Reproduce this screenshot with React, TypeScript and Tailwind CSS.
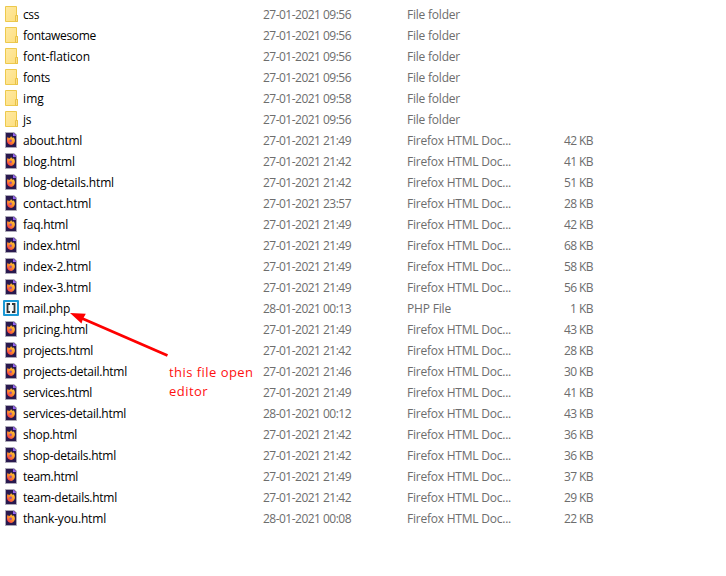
import { useLayoutEffect, useRef, useState } from 'react';

type Kind = 'folder' | 'html' | 'php';
type Entry = { name: string; width: number; date: string; kind: Kind; size?: string };

const entries: Entry[] = [
  { name: 'css', width: 16, date: '27-01-2021 09:56', kind: 'folder' },
  { name: 'fontawesome', width: 73, date: '27-01-2021 09:56', kind: 'folder' },
  { name: 'font-flaticon', width: 67, date: '27-01-2021 09:56', kind: 'folder' },
  { name: 'fonts', width: 27, date: '27-01-2021 09:56', kind: 'folder' },
  { name: 'img', width: 21, date: '27-01-2021 09:58', kind: 'folder' },
  { name: 'js', width: 8, date: '27-01-2021 09:56', kind: 'folder' },
  { name: 'about.html', width: 59, date: '27-01-2021 21:49', kind: 'html', size: '42 KB' },
  { name: 'blog.html', width: 52, date: '27-01-2021 21:42', kind: 'html', size: '41 KB' },
  { name: 'blog-details.html', width: 91, date: '27-01-2021 21:42', kind: 'html', size: '51 KB' },
  { name: 'contact.html', width: 68, date: '27-01-2021 23:57', kind: 'html', size: '28 KB' },
  { name: 'faq.html', width: 45, date: '27-01-2021 21:49', kind: 'html', size: '42 KB' },
  { name: 'index.html', width: 57, date: '27-01-2021 21:49', kind: 'html', size: '68 KB' },
  { name: 'index-2.html', width: 68, date: '27-01-2021 21:49', kind: 'html', size: '58 KB' },
  { name: 'index-3.html', width: 68, date: '27-01-2021 21:49', kind: 'html', size: '56 KB' },
  { name: 'mail.php', width: 47, date: '28-01-2021 00:13', kind: 'php', size: '1 KB' },
  { name: 'pricing.html', width: 65, date: '27-01-2021 21:49', kind: 'html', size: '43 KB' },
  { name: 'projects.html', width: 70, date: '27-01-2021 21:42', kind: 'html', size: '28 KB' },
  { name: 'projects-detail.html', width: 104, date: '27-01-2021 21:46', kind: 'html', size: '30 KB' },
  { name: 'services.html', width: 69, date: '27-01-2021 21:49', kind: 'html', size: '41 KB' },
  { name: 'services-detail.html', width: 103, date: '28-01-2021 00:12', kind: 'html', size: '43 KB' },
  { name: 'shop.html', width: 54, date: '27-01-2021 21:42', kind: 'html', size: '36 KB' },
  { name: 'shop-details.html', width: 93, date: '27-01-2021 21:42', kind: 'html', size: '36 KB' },
  { name: 'team.html', width: 55, date: '27-01-2021 21:49', kind: 'html', size: '37 KB' },
  { name: 'team-details.html', width: 94, date: '27-01-2021 21:42', kind: 'html', size: '29 KB' },
  { name: 'thank-you.html', width: 83, date: '28-01-2021 00:08', kind: 'html', size: '22 KB' },
];

const typeLabel: Record<Kind, { text: string; width: number }> = {
  folder: { text: 'File folder', width: 53 },
  html: { text: 'Firefox HTML Doc...', width: 104 },
  php: { text: 'PHP File', width: 44 },
};

function Label({ text, width }: { text: string; width: number }) {
  const ref = useRef<HTMLSpanElement>(null);
  const [spacing, setSpacing] = useState(0);
  useLayoutEffect(() => {
    const natural = ref.current!.getBoundingClientRect().width;
    setSpacing((width - natural) / text.length);
  }, []);
  return (
    <span ref={ref} className="inline-block whitespace-pre [font-variant-ligatures:none]" style={{ letterSpacing: spacing }}>
      {text}
    </span>
  );
}

function FolderIcon() {
  return (
    <svg width="14" height="17" viewBox="0 0 14 17" className="ml-[5px] shrink-0">
      <defs>
        <linearGradient id="folder" x1="0" y1="0" x2="1" y2="1">
          <stop offset="0" stopColor="#ffe9a2" />
          <stop offset="1" stopColor="#fddf7e" />
        </linearGradient>
      </defs>
      <path d="M.5 .5h11v9h1v6H.5z" fill="url(#folder)" stroke="#edc94c" />
      <path d="M10.500 15.500v-6h2v6z" fill="#fbe08a" stroke="#e9c248" />
    </svg>
  );
}

function FirefoxIcon() {
  return (
    <svg width="12" height="17" viewBox="0 0 12 17" className="ml-[5px] shrink-0">
      <defs>
        <linearGradient id="flame" x1="1" y1="0" x2="0.2" y2="1">
          <stop offset="0" stopColor="#ffe03d" />
          <stop offset=".5" stopColor="#ff9a28" />
          <stop offset="1" stopColor="#f5304d" />
        </linearGradient>
      </defs>
      <path d="M.5 .5h8.500l2.500 2.500v12.500H.5z" fill="#29194f" stroke="#aaa8b6" />
      <path d="M8 .5l3.500 3.500H8z" fill="#9565f2" />
      <path d="M2 6.500L2.800 4.800l.9 1.100L5 5.800 6.200 4c.2 1 1.200 1.400 1.700 2l.7-.7c1.300 1.500 1.600 3.300 1 4.800C9 12 7.600 12.900 6 12.900c-2.300 0-4-1.600-4-3.800z" fill="url(#flame)" />
      <circle cx="5.600" cy="8.700" r="1.300" fill="#9650a5" />
      <path d="M2.400 7.300c1-.7 2.100-.6 3.200.2-.8.3-1.500.4-1.600 1.300z" fill="#ff8b2b" />
    </svg>
  );
}

function BracketsIcon() {
  return (
    <svg width="16" height="17" viewBox="0 0 16 17" className="ml-[3px] shrink-0">
      <rect width="16" height="16" rx="1" fill="#1b98d5" />
      <rect x="2" y="2" width="12" height="12" fill="#f5f8f9" />
      <path d="M7 4H4.500v8H7M9 4h2.500v8H9" fill="none" stroke="#343638" strokeWidth="1.800" />
    </svg>
  );
}

const icons = { folder: FolderIcon, html: FirefoxIcon, php: BracketsIcon };

export default function App() {
  return (
    <main className="relative h-[576px] w-[726px] overflow-hidden bg-white pt-[4px] font-['Open_Sans','Noto_Sans',sans-serif] text-[12px] leading-[21px] text-[#6d6d6d]">
      {entries.map((e) => {
        const Icon = icons[e.kind];
        return (
          <div key={e.name} className="grid h-[21px] w-[593px] grid-cols-[23px_240px_144px_120px_1fr] items-center">
            <Icon />
            <div className="text-black"><Label text={e.name} width={e.width} /></div>
            <div><Label text={e.date} width={88} /></div>
            <div><Label text={typeLabel[e.kind].text} width={typeLabel[e.kind].width} /></div>
            <div className="text-right">{e.size && <Label text={e.size} width={e.size.length === 5 ? 29 : 23} />}</div>
          </div>
        );
      })}
      <svg className="absolute left-[66px] top-[308px]" width="106" height="54" viewBox="0 0 106 54">
        <path d="M14 9.500L101.500 47.500" stroke="#fe0000" strokeWidth="2.800" />
        <path d="M4 5L19.800 5.800L17 10.800L15.500 15.500z" fill="#fe0000" />
      </svg>
      <div className="absolute left-[169px] top-[363px] text-[13px] leading-[19px] text-[#ff1010]">
        <div><Label text="this file open" width={84.5} /></div>
        <div><Label text="editor" width={39} /></div>
      </div>
    </main>
  );
}
